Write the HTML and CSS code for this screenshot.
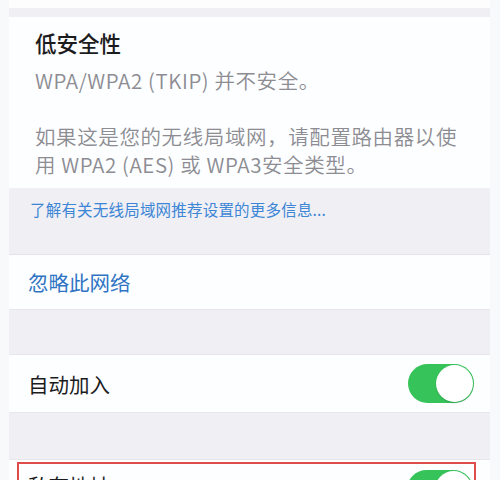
FILE: index.html
```html
<!DOCTYPE html>
<html lang="zh-CN">
<head>
<meta charset="utf-8">
<link rel="stylesheet" href="styles.css">
</head>
<body>
<div class="screen">
  <div class="cell-top"></div>
  <div class="gap gap-small"></div>
  <div class="card security">
    <div class="title">低安全性</div>
    <div class="para">WPA/WPA2 (TKIP) 并不安全。</div>
    <div class="para blank">&nbsp;</div>
    <div class="para">如果这是您的无线局域网，请配置路由器以使<br>用 WPA2 (AES) 或 WPA3安全类型。</div>
  </div>
  <div class="gap footer">
    <span class="more">了解有关无线局域网推荐设置的更多信息...</span>
  </div>
  <div class="card row row-forget">
    <span class="action">忽略此网络</span>
  </div>
  <div class="gap gap-mid"></div>
  <div class="card row row-join">
    <span class="label">自动加入</span>
    <div class="toggle"></div>
  </div>
  <div class="gap gap-mid2"></div>
  <div class="card row-private">
    <div class="highlight">
      <span class="label">私有地址</span>
      <div class="toggle"></div>
    </div>
  </div>
</div>
</body>
</html>
```
FILE: styles.css
```css
html, body {
  margin: 0;
  padding: 0;
  background: #f8f9fa;
  height: 480px;
  overflow: hidden;
}
.screen {
  margin-left: 9px;
  width: 481px;
  background: #efeff4;
  font-family: "Noto Sans CJK SC", "Noto Sans", sans-serif;
}
.cell-top {
  height: 8px;
  background: #fdfdfe;
}
.gap {
  background: #efeff4;
}
.gap-small { height: 9px; }
.gap-mid { height: 44px; border-bottom: 1px solid #e6e6eb; }
.gap-mid2 { height: 46px; border-bottom: 1px solid #e6e6eb; }
.card {
  background: #fdfeff;
}
.security {
  height: 171px;
  box-sizing: border-box;
  padding: 12px 10px 0 26px;
}
.title {
  font-size: 21.5px;
  line-height: 28px;
  font-weight: 500;
  color: #1c1c1e;
  margin-bottom: 9px;
}
.para {
  font-size: 20.5px;
  line-height: 28px;
  font-weight: 350;
  letter-spacing: 0.6px;
  color: #8c8c92;
  white-space: nowrap;
}
.footer {
  height: 67px;
  box-sizing: border-box;
  padding: 9px 0 0 21px;
  border-bottom: 1px solid #e3e3e8;
}
.more {
  font-size: 15.5px;
  line-height: 20px;
  letter-spacing: 0.2px;
  color: #3d86d6;
}
.row {
  display: flex;
  align-items: center;
  justify-content: space-between;
  box-sizing: border-box;
  padding: 0 16px 0 19px;
}
.row-forget {
  height: 55px;
  border-bottom: 1px solid #e6e6eb;
}
.row-join {
  height: 58px;
  border-bottom: 1px solid #e6e6eb;
}
.action {
  font-size: 20.5px;
  line-height: 28px;
  color: #2f74c4;
}
.label {
  font-size: 20.5px;
  line-height: 28px;
  color: #1c1c1e;
}
.toggle {
  position: relative;
  width: 66px;
  height: 39px;
  border-radius: 20px;
  background: #36c45a;
  flex: none;
}
.toggle::after {
  content: "";
  position: absolute;
  top: 1px;
  right: 1px;
  width: 37px;
  height: 37px;
  border-radius: 50%;
  background: #ffffff;
  box-shadow: 0 1px 2px rgba(0, 0, 0, 0.18);
}
.row-private {
  height: 30px;
  padding-top: 2px;
  overflow: hidden;
}
.highlight {
  margin: 0 14px 0 8px;
  height: 60px;
  border: 2px solid #e04b4b;
  display: flex;
  align-items: flex-start;
  justify-content: space-between;
  padding: 6px 1px 0 9px;
}
.highlight .label {
  margin-top: 1px;
}
```
